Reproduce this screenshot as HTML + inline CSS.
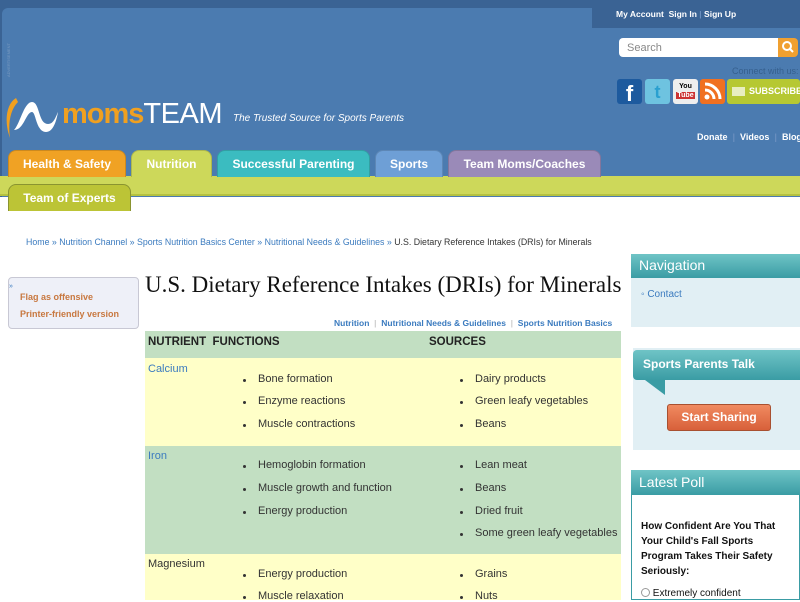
<!DOCTYPE html>
<html><head><meta charset="utf-8"><style>
*{margin:0;padding:0;box-sizing:border-box}
body{width:800px;height:600px;overflow:hidden;background:#fff;font-family:"Liberation Sans",Arial,sans-serif;position:relative}
.a{position:absolute}
.tab{position:absolute;top:150px;height:27px;border-radius:8px 8px 0 0;color:#fff;font-weight:bold;font-size:12px;text-align:center;line-height:27px;border:1px solid rgba(0,0,0,.15);border-bottom:none}
.row{position:absolute;left:145px;width:476px}
.li{position:absolute;font-size:11px;color:#333;white-space:nowrap}
.li:before{content:"";position:absolute;left:-15px;top:6px;width:3px;height:3px;background:#333;border-radius:50%}
.th{position:absolute;font-size:11.5px;font-weight:bold;color:#222}
</style></head><body>
<div class="a" style="left:0;top:0;width:800px;height:197px;background:#3a6394"></div>
<div class="a" style="left:2px;top:8px;width:800px;height:189px;background:#4b7bb0;border-radius:6px 0 0 0"></div>
<div class="a" style="left:592px;top:0;width:208px;height:28px;background:#3a6394"></div>
<div class="a" style="left:616px;top:9px;font-size:8.5px;font-weight:bold;color:#fff">My Account &nbsp;Sign In <span style="color:#6a8fbf">|</span> Sign Up</div>
<div class="a" style="left:6px;top:22px;width:6px;height:55px;font-size:4px;color:#7a9ac0;writing-mode:vertical-rl;transform:rotate(180deg)">ADVERTISEMENT</div>
<div class="a" style="left:619px;top:38px;width:160px;height:19px;background:#fff;border-radius:4px 0 0 4px;font-size:11px;color:#888;padding:4px 8px">Search</div>
<div class="a" style="left:778px;top:38px;width:20px;height:19px;background:#f0a030;border-radius:0 4px 4px 0"><svg width="20" height="19"><circle cx="9" cy="8" r="4" stroke="#fff" stroke-width="2" fill="none"/><line x1="12" y1="11" x2="15" y2="14" stroke="#fff" stroke-width="2"/></svg></div>
<div class="a" style="left:732px;top:66px;font-size:9px;color:#36608e">Connect with us:</div>
<div class="a" style="left:617px;top:79px;width:25px;height:25px;background:#1d5a9e;border-radius:3px;color:#fff;font-weight:bold;font-size:22px;text-align:center;line-height:30px">f</div>
<div class="a" style="left:645px;top:79px;width:25px;height:25px;background:#6ec3e0;border-radius:3px;color:#2aa0d0;font-weight:bold;font-size:18px;text-align:center;line-height:26px">t</div>
<div class="a" style="left:673px;top:79px;width:25px;height:25px;background:#eee;border-radius:3px;font-size:7px;font-weight:bold;text-align:center;line-height:9px;padding-top:3px">You<br><span style="background:#c33;color:#fff;padding:0 1px">Tube</span></div>
<div class="a" style="left:700px;top:79px;width:25px;height:25px;background:#f07020;border-radius:3px"><svg width="25" height="25"><circle cx="7" cy="18" r="2.5" fill="#fff"/><path d="M5 11a9 9 0 0 1 9 9M5 5a15 15 0 0 1 15 15" stroke="#fff" stroke-width="3" fill="none"/></svg></div>
<div class="a" style="left:727px;top:79px;width:73px;height:25px;background:#b6c832;border-radius:3px;color:#fff;font-size:9px;font-weight:bold;line-height:25px;padding-left:22px;white-space:nowrap;overflow:hidden"><span style="position:absolute;left:5px;top:8px;width:13px;height:9px;background:#e8eec0"></span>SUBSCRIBE</div>
<div class="a" style="left:697px;top:132px;font-size:9px;font-weight:bold;color:#fff;white-space:nowrap">Donate &nbsp;<span style="color:#6a8fbf">|</span>&nbsp; Videos &nbsp;<span style="color:#6a8fbf">|</span>&nbsp; Blogs</div>
<svg class="a" style="left:2px;top:94px" width="60" height="48"><path d="M14 4C4 10 2 28 8 44C6 30 8 16 16 8Z" fill="#f0a020"/><path d="M12 36C18 30 22 8 30 8C38 8 36 30 46 30C52 30 54 22 56 18C54 30 50 38 44 38C34 38 34 18 30 18C24 18 22 36 12 36Z" fill="#fff"/></svg>
<div class="a" style="left:62px;top:96px;font-size:29px;font-weight:bold;letter-spacing:-1px;color:#f0a020;line-height:36px;white-space:nowrap">moms<span style="color:#fff;font-weight:normal;letter-spacing:-0.5px">TEAM</span></div>
<div class="a" style="left:233px;top:113px;font-size:10px;font-style:italic;color:#fff;white-space:nowrap">The Trusted Source for Sports Parents</div>
<div class="a" style="left:0;top:176px;width:800px;height:20px;background:#cdd85a;border-bottom:2px solid #b5c240"></div>
<div class="tab" style="left:8px;width:118px;background:#f0a224">Health &amp; Safety</div>
<div class="tab" style="left:131px;width:81px;background:#cdd85a">Nutrition</div>
<div class="tab" style="left:217px;width:153px;background:#3bbcc0">Successful Parenting</div>
<div class="tab" style="left:375px;width:68px;background:#6e9fd6">Sports</div>
<div class="tab" style="left:448px;width:153px;background:#9a8ab8">Team Moms/Coaches</div>
<div class="tab" style="left:8px;top:184px;width:123px;height:27px;background:#bcc436;border-color:#8a9430">Team of Experts</div>
<div class="a" style="left:26px;top:237px;font-size:8.8px;color:#3b7bbf;white-space:nowrap">Home » Nutrition Channel » Sports Nutrition Basics Center » Nutritional Needs &amp; Guidelines » <span style="color:#333">U.S. Dietary Reference Intakes (DRIs) for Minerals</span></div>
<div class="a" style="left:8px;top:277px;width:131px;height:52px;background:#eef0f8;border:1px solid #c8c8d4;border-radius:4px"></div>
<div class="a" style="left:9px;top:283px;font-size:7px;color:#3b7bbf">»</div>
<div class="a" style="left:20px;top:289px;font-size:9px;font-weight:bold;color:#c87840;line-height:17px">Flag as offensive<br>Printer-friendly version</div>
<div class="a" style="left:145px;top:272px;font-family:'Liberation Serif',serif;font-size:23px;color:#111;white-space:nowrap">U.S. Dietary Reference Intakes (DRIs) for Minerals</div>
<div class="a" style="left:334px;top:318px;font-size:8.5px;font-weight:bold;color:#3b7bbf;white-space:nowrap">Nutrition &nbsp;<span style="color:#ccc">|</span>&nbsp; Nutritional Needs &amp; Guidelines &nbsp;<span style="color:#ccc">|</span>&nbsp; Sports Nutrition Basics</div>
<div class="row" style="top:331px;height:27px;background:#c2dfc2"></div>
<div class="row" style="top:358px;height:88px;background:#ffffc8"></div>
<div class="row" style="top:446px;height:108px;background:#c2dfc2"></div>
<div class="row" style="top:554px;height:46px;background:#ffffc8"></div>
<div class="th" style="left:148px;top:336px">NUTRIENT &nbsp;FUNCTIONS</div>
<div class="th" style="left:429px;top:336px">SOURCES</div>
<div class="a" style="left:148px;top:363px;font-size:11px;color:#3b7bbf">Calcium</div>
<div class="a" style="left:148px;top:450px;font-size:11px;color:#3b7bbf">Iron</div>
<div class="a" style="left:148px;top:558px;font-size:11px;color:#333">Magnesium</div>
<div class="li" style="left:258px;top:373px">Bone formation</div>
<div class="li" style="left:258px;top:395px">Enzyme reactions</div>
<div class="li" style="left:258px;top:418px">Muscle contractions</div>
<div class="li" style="left:475px;top:373px">Dairy products</div>
<div class="li" style="left:475px;top:395px">Green leafy vegetables</div>
<div class="li" style="left:475px;top:418px">Beans</div>
<div class="li" style="left:258px;top:459px">Hemoglobin formation</div>
<div class="li" style="left:258px;top:482px">Muscle growth and function</div>
<div class="li" style="left:258px;top:505px">Energy production</div>
<div class="li" style="left:475px;top:459px">Lean meat</div>
<div class="li" style="left:475px;top:482px">Beans</div>
<div class="li" style="left:475px;top:505px">Dried fruit</div>
<div class="li" style="left:475px;top:527px">Some green leafy vegetables</div>
<div class="li" style="left:258px;top:568px">Energy production</div>
<div class="li" style="left:258px;top:590px">Muscle relaxation</div>
<div class="li" style="left:475px;top:568px">Grains</div>
<div class="li" style="left:475px;top:590px">Nuts</div>
<div class="a" style="left:631px;top:254px;width:169px;height:73px;background:#e1eff4"></div>
<div class="a" style="left:631px;top:254px;width:169px;height:24px;background:linear-gradient(#6fc4c6,#3a9ca4);color:#fff;font-size:14px;padding:3px 8px">Navigation</div>
<div class="a" style="left:641px;top:289px;font-size:10px;color:#3b7bbf">◦ Contact</div>
<div class="a" style="left:633px;top:348px;width:167px;height:102px;background:#e1eff4"></div>
<div class="a" style="left:633px;top:350px;width:167px;height:30px;background:linear-gradient(#6fc4c6,#3a9ca4);border-radius:4px 0 0 4px;color:#fff;font-size:12px;font-weight:bold;padding:7px 10px">Sports Parents Talk</div>
<svg class="a" style="left:645px;top:380px" width="30" height="16"><path d="M0 0L20 15L20 0Z" fill="#3a9ca4"/></svg>
<div class="a" style="left:667px;top:404px;width:104px;height:27px;background:linear-gradient(#f08a60,#d8603a);border:1px solid #a85030;border-radius:3px;color:#fff;font-size:12px;font-weight:bold;text-align:center;line-height:25px">Start Sharing</div>
<div class="a" style="left:631px;top:470px;width:169px;height:130px;border:1px solid #3a9ca4;background:#fff"></div>
<div class="a" style="left:631px;top:470px;width:169px;height:25px;background:linear-gradient(#6fc4c6,#3a9ca4);color:#fff;font-size:14px;padding:4px 8px">Latest Poll</div>
<div class="a" style="left:641px;top:519px;width:150px;font-size:10px;font-weight:bold;color:#111;line-height:15px">How Confident Are You That Your Child's Fall Sports Program Takes Their Safety Seriously:</div>
<div class="a" style="left:641px;top:588px;font-size:10px;color:#111"><span style="display:inline-block;width:9px;height:9px;border:1px solid #999;border-radius:50%;vertical-align:-1px"></span> Extremely confident</div>
</body></html>
